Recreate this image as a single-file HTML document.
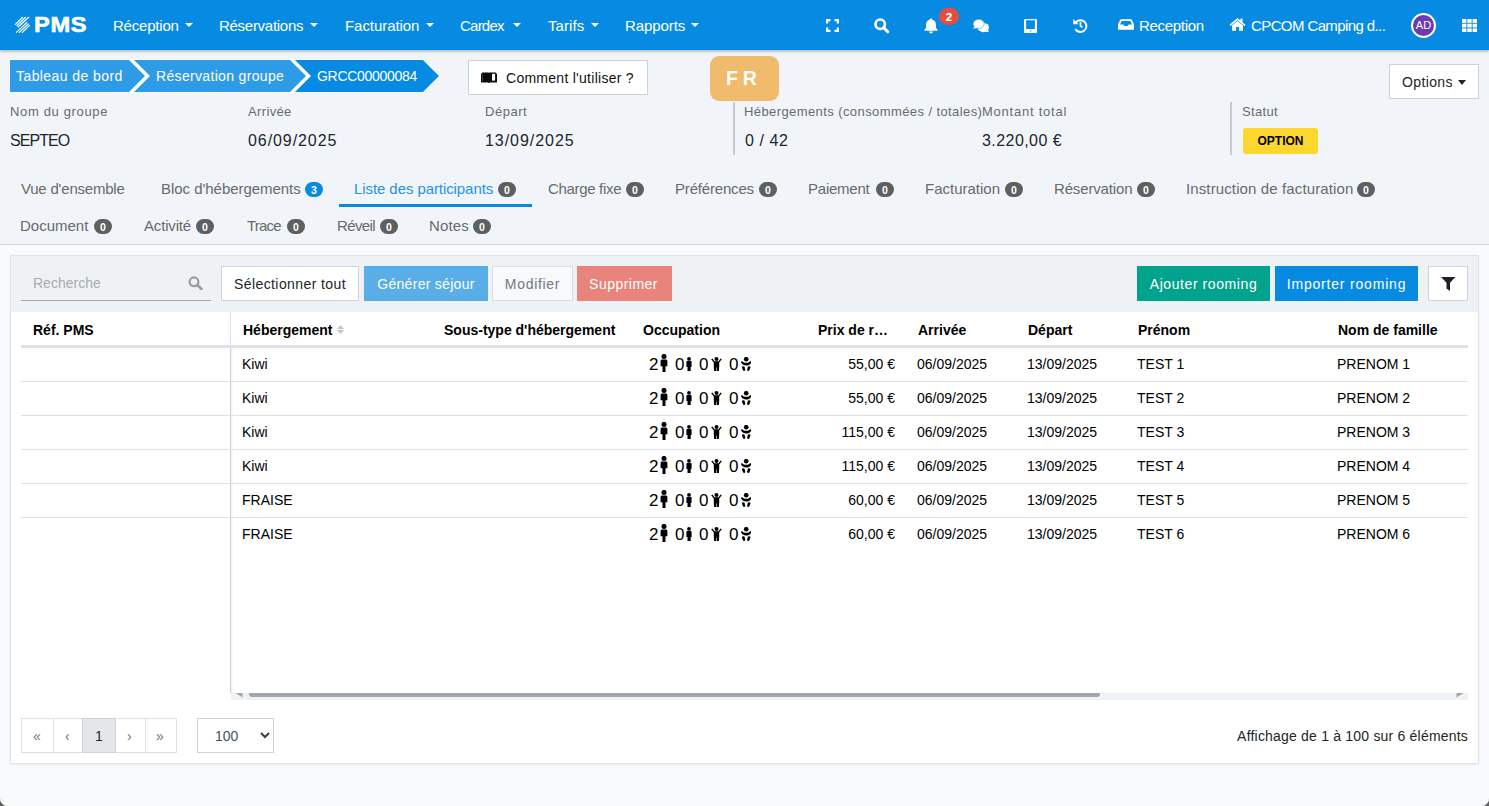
<!DOCTYPE html>
<html><head><meta charset="utf-8">
<style>
*{box-sizing:border-box;margin:0;padding:0}
html,body{width:1489px;height:806px;overflow:hidden}
body{position:relative;background:#f8fafc;font-family:"Liberation Sans",sans-serif;color:#212529}
.a{position:absolute;white-space:nowrap}
#nav{position:absolute;left:0;top:0;width:1489px;height:50px;background:#078be2;box-shadow:0 1px 3px rgba(0,0,0,.35);z-index:5}
.ni{position:absolute;top:17px;font-size:15px;line-height:18px;color:#fff}
.car{position:absolute;top:23px;width:0;height:0;border-left:4px solid transparent;border-right:4px solid transparent;border-top:4px solid #fff}
#hdr{position:absolute;left:0;top:50px;width:1489px;height:195px;background:#f1f5fa;border-bottom:1px solid #d5d8db}
.lbl{position:absolute;font-size:13px;line-height:16px;color:#666b70}
.val{position:absolute;font-size:16px;line-height:20px;color:#212529}
.tab{position:absolute;font-size:15px;line-height:18px;color:#676a6d}
.bdg{position:absolute;height:15px;width:18px;border-radius:8px;background:#5d5f61;color:#fff;font-size:10.5px;font-weight:bold;line-height:17px;text-align:center}
.btn{position:absolute;font-size:14px;line-height:33px;text-align:center}
.th{position:absolute;top:322px;font-size:14px;font-weight:bold;line-height:16px;color:#000}
.td{position:absolute;font-size:14px;line-height:16px;color:#000}
.occ{position:absolute;font-size:17px;line-height:17px;color:#000}
.rl{position:absolute;left:21px;width:1447px;height:1px;background:#dee2e6}
</style></head><body>
<div id="nav">
  <svg class="a" style="left:0;top:0" width="40" height="50" viewBox="0 0 40 50">
    <g stroke="#fff" stroke-width="1.25" stroke-linecap="round">
      <line x1="15.4" y1="24.4" x2="22.6" y2="17.3"/><line x1="16.9" y1="25.6" x2="25.6" y2="17.3"/><line x1="18.3" y1="26.8" x2="28.8" y2="17.3"/>
      <line x1="16.4" y1="32.4" x2="26.6" y2="22.6"/><line x1="19.3" y1="32.4" x2="28.2" y2="24"/><line x1="22.4" y1="32.4" x2="29.6" y2="25.4"/>
    </g>
  </svg>
  <div class="a" style="left:34px;top:13px;font-size:21.5px;line-height:24px;font-weight:bold;color:#fff;-webkit-text-stroke:0.6px #fff;letter-spacing:0.6px;transform:scaleX(1.1);transform-origin:0 0">PMS</div>
  <div class="ni" style="left:113px;letter-spacing:-0.21px">Réception</div><div class="car" style="left:185px"></div>
  <div class="ni" style="left:219px;letter-spacing:-0.28px">Réservations</div><div class="car" style="left:310px"></div>
  <div class="ni" style="left:345px;letter-spacing:-0.06px">Facturation</div><div class="car" style="left:426px"></div>
  <div class="ni" style="left:460px;letter-spacing:-0.77px">Cardex</div><div class="car" style="left:513px"></div>
  <div class="ni" style="left:548px;letter-spacing:0.09px">Tarifs</div><div class="car" style="left:591px"></div>
  <div class="ni" style="left:625px;letter-spacing:-0.07px">Rapports</div><div class="car" style="left:691px"></div>
  <!-- icons -->
  <svg class="a" style="left:826px;top:19px" width="13" height="13" viewBox="0 0 13 13" fill="none" stroke="#fff" stroke-width="2.2">
    <path d="M1.1 4.5V1.1H4.5M8.5 1.1H11.9V4.5M11.9 8.5V11.9H8.5M4.5 11.9H1.1V8.5"/>
  </svg>
  <svg class="a" style="left:874px;top:18px" width="16" height="16" viewBox="0 0 16 16" fill="none" stroke="#fff">
    <circle cx="6.2" cy="6.2" r="4.7" stroke-width="2.7"/><line x1="9.6" y1="9.6" x2="13.8" y2="13.8" stroke-width="3" stroke-linecap="round"/>
  </svg>
  <svg class="a" style="left:924px;top:18px" width="14" height="16" viewBox="0 0 14 16" fill="#fff">
    <path d="M7 0.5c.8 0 1.3.5 1.3 1.2 2.3.5 3.6 2.4 3.6 4.8v3.2l1.6 2.1v1H0.5v-1l1.6-2.1V6.5c0-2.4 1.3-4.3 3.6-4.8C5.7 1 6.2.5 7 .5z"/><path d="M5 13.6h4c0 1.1-.9 1.9-2 1.9s-2-.8-2-1.9z"/>
  </svg>
  <div class="a" style="left:939px;top:8px;width:20px;height:17px;border-radius:9px;background:#e74c3c;color:#fff;font-size:11.5px;font-weight:bold;line-height:19px;text-align:center;-webkit-text-stroke:0.2px #fff">2</div>
  <svg class="a" style="left:972px;top:19px" width="18" height="14" viewBox="0 0 18 14" fill="#fff">
    <ellipse cx="11.3" cy="8.6" rx="5.7" ry="4.6"/><path d="M13 12.5L17 13.2 15.6 10.2z"/>
    <path d="M1 10L2.2 7.6A5.5 4.6 0 1 1 4.6 9.2z" stroke="#3a9fe6" stroke-width="0.6"/>
  </svg>
  <svg class="a" style="left:1024px;top:18.8px" width="13" height="14.2" viewBox="0 0 13 14.2">
    <path fill="#fff" fill-rule="evenodd" d="M1.3 0H11.7C12.4 0 13 .6 13 1.3V12.9C13 13.6 12.4 14.2 11.7 14.2H1.3C.6 14.2 0 13.6 0 12.9V1.3C0 .6.6 0 1.3 0zM2.1 1.3V10H10.9V1.3z"/>
    <rect x="5.9" y="11.3" width="1.4" height="1.4" fill="#5aaee9"/>
  </svg>
  <svg class="a" style="left:1072px;top:18px" width="16" height="16" viewBox="0 0 16 16" fill="none" stroke="#fff">
    <path d="M3.7 4.6A5.9 5.9 0 1 1 3.3 10.9" stroke-width="2"/><path d="M1.2 .9L1.2 6.2 6.5 6.2z" fill="#fff" stroke="none"/><path d="M8.5 4V7.9L10.3 9.4" stroke-width="1.7"/>
  </svg>
  <svg class="a" style="left:1118px;top:19px" width="16" height="11" viewBox="0 0 16 11" fill="#fff">
    <path fill-rule="evenodd" d="M3.2 0.2h9.6c.5 0 .8.2 1 .6L16 5.2V10.2c0 .4-.3.6-.6.6H.6C.3 10.8 0 10.6 0 10.2V5.2L2.2.8c.2-.4.5-.6 1-.6zM3.6 2L2 5.6h3.4l1 1.4h3.2l1-1.4H14L12.4 2z"/>
  </svg>
  <div class="ni" style="left:1139px;letter-spacing:-0.3px">Reception</div>
  <svg class="a" style="left:1229px;top:17px" width="17" height="14" viewBox="0 0 17 14" fill="#fff">
    <path d="M8.5 1L0.5 7.8l1 1.2L8.5 3.2 15.5 9l1-1.2L13.5 5.2V1.5h-2v2L8.5 1z"/><path d="M3 8.5L8.5 4l5.5 4.5V13.8H10V10H7v3.8H3z"/>
  </svg>
  <div class="ni" style="left:1251px;letter-spacing:-0.6px">CPCOM Camping d...</div>
  <div class="a" style="left:1411px;top:13px;width:25px;height:25px;border-radius:50%;background:#6c3ab4;border:2px solid #fff;color:#fff;font-size:11px;line-height:21px;text-align:center">AD</div>
  <svg class="a" style="left:1462px;top:19px" width="15" height="13.2" viewBox="0 0 15 13.2" fill="#fff"><rect x="0" y="0" width="4.4" height="3.8"/><rect x="5.3" y="0" width="4.4" height="3.8"/><rect x="10.6" y="0" width="4.4" height="3.8"/><rect x="0" y="4.7" width="4.4" height="3.8"/><rect x="5.3" y="4.7" width="4.4" height="3.8"/><rect x="10.6" y="4.7" width="4.4" height="3.8"/><rect x="0" y="9.4" width="4.4" height="3.8"/><rect x="5.3" y="9.4" width="4.4" height="3.8"/><rect x="10.6" y="9.4" width="4.4" height="3.8"/></svg>
</div>

<div id="hdr"></div>
<!-- breadcrumb -->
<svg class="a" style="left:0;top:50px" width="450" height="50" viewBox="0 50 450 50">
    <polygon points="9,59 424,59 441,76 424,93 9,93" fill="#fff"/>
    <polygon points="10,60 129,60 145,76 129,92 10,92" fill="#2e9be6"/>
    <polygon points="134,60 290,60 306,76 290,92 134,92 150,76" fill="#2e9be6"/>
    <polygon points="295,60 423,60 439,76 423,92 295,92 311,76" fill="#078be2"/>
</svg>
<div class="a" style="left:16px;top:68px;font-size:14px;line-height:17px;color:#fff;letter-spacing:0.42px">Tableau de bord</div>
<div class="a" style="left:156px;top:68px;font-size:14px;line-height:17px;color:#fff;letter-spacing:0.33px">Réservation groupe</div>
<div class="a" style="left:317px;top:68px;font-size:14px;line-height:17px;color:#fff;letter-spacing:-0.3px">GRCC00000084</div>

<div class="a" style="left:468px;top:60px;width:180px;height:35px;background:#fff;border:1px solid #cdd2d8"></div>
<svg class="a" style="left:481px;top:72px" width="16" height="11" viewBox="0 0 16 11"><path d="M0 1.6H1.1V0.6H7.6L8 1 8.4 0.6H14.9V1.6H16V10.6H9.2L8 11 6.8 10.6H0z" fill="#0b0b0b"/><rect x="11" y="1.8" width="3.1" height="6.8" fill="#fff"/><rect x="0.9" y="2" width="0.6" height="7.6" fill="#7a6040"/></svg>
<div class="a" style="left:506px;top:70px;font-size:14px;line-height:17px;color:#111;letter-spacing:0.27px">Comment l'utiliser ?</div>

<div class="a" style="left:710px;top:56px;width:69px;height:45px;border-radius:9px;background:#f0bb6c"></div><div class="a" style="left:726px;top:67px;color:#fff;font-size:19.5px;font-weight:bold;line-height:22px;letter-spacing:-0.3px">F R</div>

<div class="a" style="left:1389px;top:64px;width:90px;height:35px;background:#fff;border:1px solid #cdd2d8"></div>
<div class="a" style="left:1402px;top:74px;font-size:14px;line-height:17px;color:#212529;letter-spacing:0.38px">Options</div>
<div class="car" style="left:1458px;top:80px;border-top-color:#212529;border-left-width:4.5px;border-right-width:4.5px;border-top-width:5px"></div>

<div class="lbl" style="left:10px;top:104px;letter-spacing:0.65px">Nom du groupe</div>
<div class="val" style="left:10px;top:131px;letter-spacing:-0.93px">SEPTEO</div>
<div class="lbl" style="left:248px;top:104px;letter-spacing:0.36px">Arrivée</div>
<div class="val" style="left:248px;top:131px;letter-spacing:0.92px">06/09/2025</div>
<div class="lbl" style="left:485px;top:104px;letter-spacing:0.54px">Départ</div>
<div class="val" style="left:485px;top:131px;letter-spacing:0.96px">13/09/2025</div>
<div class="a" style="left:733px;top:102px;width:2px;height:53px;background:#c9c9c9"></div>
<div class="lbl" style="left:744px;top:104px;letter-spacing:0.41px">Hébergements (consommées / totales)</div>
<div class="val" style="left:745px;top:131px;letter-spacing:0.55px">0 / 42</div>
<div class="lbl" style="left:982px;top:104px;letter-spacing:0.76px">Montant total</div>
<div class="val" style="left:982px;top:131px;letter-spacing:0.44px">3.220,00 €</div>
<div class="a" style="left:1230px;top:102px;width:2px;height:53px;background:#c9c9c9"></div>
<div class="lbl" style="left:1242px;top:104px;letter-spacing:0.33px">Statut</div>
<div class="a" style="left:1243px;top:128px;width:75px;height:26px;border-radius:3px;background:#fdd630;color:#000;font-size:12px;font-weight:bold;line-height:26px;text-align:center">OPTION</div>

<!-- tabs -->
<div class="tab" style="left:21px;top:180px;letter-spacing:-0.21px">Vue d'ensemble</div>
<div class="tab" style="left:161px;top:180px;letter-spacing:-0.04px">Bloc d'hébergements</div><div class="bdg" style="left:305px;top:182px;background:#078be2">3</div>
<div class="tab" style="left:354px;top:180px;color:#2893e3;letter-spacing:-0.08px">Liste des participants</div><div class="bdg" style="left:498px;top:182px">0</div>
<div class="a" style="left:339px;top:204px;width:193px;height:3px;background:#078be2"></div>
<div class="tab" style="left:548px;top:180px;letter-spacing:-0.32px">Charge fixe</div><div class="bdg" style="left:626px;top:182px">0</div>
<div class="tab" style="left:675px;top:180px;letter-spacing:-0.18px">Préférences</div><div class="bdg" style="left:759px;top:182px">0</div>
<div class="tab" style="left:808px;top:180px;letter-spacing:-0.23px">Paiement</div><div class="bdg" style="left:876px;top:182px">0</div>
<div class="tab" style="left:925px;top:180px">Facturation</div><div class="bdg" style="left:1005px;top:182px">0</div>
<div class="tab" style="left:1054px;top:180px;letter-spacing:-0.15px">Réservation</div><div class="bdg" style="left:1137px;top:182px">0</div>
<div class="tab" style="left:1186px;top:180px;letter-spacing:0.12px">Instruction de facturation</div><div class="bdg" style="left:1357px;top:182px">0</div>

<div class="tab" style="left:20px;top:217px">Document</div><div class="bdg" style="left:94px;top:219px">0</div>
<div class="tab" style="left:144px;top:217px;letter-spacing:-0.17px">Activité</div><div class="bdg" style="left:196px;top:219px">0</div>
<div class="tab" style="left:247px;top:217px;letter-spacing:-0.79px">Trace</div><div class="bdg" style="left:287px;top:219px">0</div>
<div class="tab" style="left:337px;top:217px;letter-spacing:-0.63px">Réveil</div><div class="bdg" style="left:380px;top:219px">0</div>
<div class="tab" style="left:429px;top:217px;letter-spacing:0.13px">Notes</div><div class="bdg" style="left:473px;top:219px">0</div>

<!-- card -->
<div class="a" style="left:10px;top:255px;width:1469px;height:509px;background:#fff;border:1px solid #dfe3e7;box-shadow:0 1px 2px rgba(0,0,0,.06)"></div>
<div class="a" style="left:11px;top:256px;width:1467px;height:56px;background:#eef2f5"></div>
<svg width="0" height="0" style="position:absolute"><defs>
<symbol id="ad" viewBox="0 0 8 18"><circle cx="4" cy="2.4" r="2.5"/><path d="M0.6 7.2c0-1 .6-1.6 1.4-1.6h4c.8 0 1.4.6 1.4 1.6v5H5.5v5.8H2.5v-5.8H0.6z"/></symbol>
<symbol id="te" viewBox="0 0 6 14"><circle cx="3" cy="1.9" r="1.9"/><path d="M0.4 5c0-.6.4-1 1-1h3.2c.6 0 1 .4 1 1v4.9H4.7v4.1H1.5V9.9H0.4z"/></symbol>
<symbol id="ch" viewBox="0 0 11 14"><circle cx="5.5" cy="2" r="2"/><path d="M0.2 2.2L1.4 1.4 3.4 4.2H7.6L9.6 1.4 10.8 2.2 8.2 5.6V9.6L7.9 14H5.8V10.4H5.2V14H3.1L2.8 9.6V5.6z"/></symbol>
<symbol id="bb" viewBox="0 0 10.4 14"><circle cx="5.2" cy="2.2" r="2.3"/><path d="M0.9 3.9c1.2 1.3 2.6 1.9 4.3 1.9s3.1-.6 4.3-1.9l1 1.2C9.3 7.3 7.5 8.6 5.2 8.6S1.1 7.3-.1 5.1z"/><path d="M1.5 9.5c.9-.5 2-.1 2.2.8l.6 2.5c.2.7-.4 1.2-1.1 1.2-.5 0-1-.3-1.2-.8L1 10.8c-.2-.5 0-1 .5-1.3z"/><path d="M8.9 9.5c-.9-.5-2-.1-2.2.8l-.6 2.5c-.2.7.4 1.2 1.1 1.2.5 0 1-.3 1.2-.8l1-2.4c.2-.5 0-1-.5-1.3z"/></symbol>
</defs></svg>
<div class="a" style="left:33px;top:275px;font-size:14px;line-height:16px;color:#a9acaf">Recherche</div>
<div class="a" style="left:21px;top:300px;width:190px;height:1px;background:#a3a6a9"></div>
<svg class="a" style="left:188px;top:276px" width="16" height="14" viewBox="0 0 16 14" fill="none" stroke="#9a9c9e"><circle cx="6" cy="5.8" r="4.4" stroke-width="2.2"/><line x1="9.3" y1="9" x2="13.5" y2="13" stroke-width="2.6" stroke-linecap="round"/></svg>
<div class="btn" style="left:221px;top:266px;width:138px;height:35px;background:#fff;border:1px solid #cfd4d9;color:#212529;letter-spacing:0.4px;line-height:35px">Sélectionner tout</div>
<div class="btn" style="left:364px;top:266px;width:124px;height:35px;background:#59aee8;color:#fff;letter-spacing:0.29px;line-height:37px">Générer séjour</div>
<div class="btn" style="left:492px;top:266px;width:81px;height:35px;background:#f8f9fa;border:1px solid #dadee2;color:#73787d;letter-spacing:0.7px;line-height:35px">Modifier</div>
<div class="btn" style="left:577px;top:266px;width:95px;height:35px;background:#e9847c;color:#fff;letter-spacing:0.47px;text-indent:-2px;line-height:37px">Supprimer</div>
<div class="btn" style="left:1137px;top:266px;width:133px;height:35px;background:#02a38c;color:#fff;letter-spacing:0.58px;line-height:37px">Ajouter rooming</div>
<div class="btn" style="left:1275px;top:266px;width:143px;height:35px;background:#078be2;color:#fff;letter-spacing:0.81px;line-height:37px">Importer rooming</div>
<div class="a" style="left:1428px;top:266px;width:40px;height:35px;background:#fff;border:1px solid #cfd4d9"></div>
<svg class="a" style="left:1440.8px;top:276.8px" width="15" height="14.2" viewBox="0 0 15 14.2" fill="#1d2024"><path d="M0 0H14.4L9 5.8V14L5.5 11.6V5.8z"/></svg>
<div class="a" style="left:230px;top:312px;width:1px;height:381px;background:#dde1e5"></div>
<div class="a" style="left:230px;top:348px;width:1px;height:345px;background:#cdd1d5"></div><div class="a" style="left:231px;top:348px;width:2px;height:345px;background:linear-gradient(90deg,#eef0f2,#fbfbfc)"></div>
<div class="a" style="left:21px;top:345px;width:1447px;height:3px;background:#dee2e6"></div>
<div class="th" style="left:33px">Réf. PMS</div>
<div class="th" style="left:243px">Hébergement</div>
<div class="th" style="left:444px">Sous-type d'hébergement</div>
<div class="th" style="left:643px">Occupation</div>
<div class="th" style="left:818px">Prix de r…</div>
<div class="th" style="left:918px">Arrivée</div>
<div class="th" style="left:1028px">Départ</div>
<div class="th" style="left:1138px">Prénom</div>
<div class="th" style="left:1338px">Nom de famille</div>
<svg class="a" style="left:336.8px;top:325px" width="7" height="9" viewBox="0 0 7 9" fill="#c3c4c6"><path d="M3.5 0L7 3.9H0z M3.5 9L7 4.9H0z"/></svg>
<div class="rl" style="top:381px"></div>
<div class="td" style="left:242px;top:356px">Kiwi</div>
<div class="occ" style="left:649px;top:356px">2</div><svg class="a" style="left:660px;top:354px" width="8" height="18"><use href="#ad"/></svg>
<div class="occ" style="left:675px;top:356px">0</div><svg class="a" style="left:686px;top:357px" width="6" height="14"><use href="#te"/></svg>
<div class="occ" style="left:699px;top:356px">0</div><svg class="a" style="left:711px;top:357px" width="11" height="14"><use href="#ch"/></svg>
<div class="occ" style="left:729px;top:356px">0</div><svg class="a" style="left:741px;top:357px" width="10.4" height="14"><use href="#bb"/></svg>
<div class="td" style="left:795px;width:100px;text-align:right;top:356px">55,00 €</div>
<div class="td" style="left:917px;top:356px">06/09/2025</div>
<div class="td" style="left:1027px;top:356px">13/09/2025</div>
<div class="td" style="left:1137px;top:356px">TEST 1</div>
<div class="td" style="left:1337px;top:356px">PRENOM 1</div>
<div class="rl" style="top:415px"></div>
<div class="td" style="left:242px;top:390px">Kiwi</div>
<div class="occ" style="left:649px;top:390px">2</div><svg class="a" style="left:660px;top:388px" width="8" height="18"><use href="#ad"/></svg>
<div class="occ" style="left:675px;top:390px">0</div><svg class="a" style="left:686px;top:391px" width="6" height="14"><use href="#te"/></svg>
<div class="occ" style="left:699px;top:390px">0</div><svg class="a" style="left:711px;top:391px" width="11" height="14"><use href="#ch"/></svg>
<div class="occ" style="left:729px;top:390px">0</div><svg class="a" style="left:741px;top:391px" width="10.4" height="14"><use href="#bb"/></svg>
<div class="td" style="left:795px;width:100px;text-align:right;top:390px">55,00 €</div>
<div class="td" style="left:917px;top:390px">06/09/2025</div>
<div class="td" style="left:1027px;top:390px">13/09/2025</div>
<div class="td" style="left:1137px;top:390px">TEST 2</div>
<div class="td" style="left:1337px;top:390px">PRENOM 2</div>
<div class="rl" style="top:449px"></div>
<div class="td" style="left:242px;top:424px">Kiwi</div>
<div class="occ" style="left:649px;top:424px">2</div><svg class="a" style="left:660px;top:422px" width="8" height="18"><use href="#ad"/></svg>
<div class="occ" style="left:675px;top:424px">0</div><svg class="a" style="left:686px;top:425px" width="6" height="14"><use href="#te"/></svg>
<div class="occ" style="left:699px;top:424px">0</div><svg class="a" style="left:711px;top:425px" width="11" height="14"><use href="#ch"/></svg>
<div class="occ" style="left:729px;top:424px">0</div><svg class="a" style="left:741px;top:425px" width="10.4" height="14"><use href="#bb"/></svg>
<div class="td" style="left:795px;width:100px;text-align:right;top:424px">115,00 €</div>
<div class="td" style="left:917px;top:424px">06/09/2025</div>
<div class="td" style="left:1027px;top:424px">13/09/2025</div>
<div class="td" style="left:1137px;top:424px">TEST 3</div>
<div class="td" style="left:1337px;top:424px">PRENOM 3</div>
<div class="rl" style="top:483px"></div>
<div class="td" style="left:242px;top:458px">Kiwi</div>
<div class="occ" style="left:649px;top:458px">2</div><svg class="a" style="left:660px;top:456px" width="8" height="18"><use href="#ad"/></svg>
<div class="occ" style="left:675px;top:458px">0</div><svg class="a" style="left:686px;top:459px" width="6" height="14"><use href="#te"/></svg>
<div class="occ" style="left:699px;top:458px">0</div><svg class="a" style="left:711px;top:459px" width="11" height="14"><use href="#ch"/></svg>
<div class="occ" style="left:729px;top:458px">0</div><svg class="a" style="left:741px;top:459px" width="10.4" height="14"><use href="#bb"/></svg>
<div class="td" style="left:795px;width:100px;text-align:right;top:458px">115,00 €</div>
<div class="td" style="left:917px;top:458px">06/09/2025</div>
<div class="td" style="left:1027px;top:458px">13/09/2025</div>
<div class="td" style="left:1137px;top:458px">TEST 4</div>
<div class="td" style="left:1337px;top:458px">PRENOM 4</div>
<div class="rl" style="top:517px"></div>
<div class="td" style="left:242px;top:492px">FRAISE</div>
<div class="occ" style="left:649px;top:492px">2</div><svg class="a" style="left:660px;top:490px" width="8" height="18"><use href="#ad"/></svg>
<div class="occ" style="left:675px;top:492px">0</div><svg class="a" style="left:686px;top:493px" width="6" height="14"><use href="#te"/></svg>
<div class="occ" style="left:699px;top:492px">0</div><svg class="a" style="left:711px;top:493px" width="11" height="14"><use href="#ch"/></svg>
<div class="occ" style="left:729px;top:492px">0</div><svg class="a" style="left:741px;top:493px" width="10.4" height="14"><use href="#bb"/></svg>
<div class="td" style="left:795px;width:100px;text-align:right;top:492px">60,00 €</div>
<div class="td" style="left:917px;top:492px">06/09/2025</div>
<div class="td" style="left:1027px;top:492px">13/09/2025</div>
<div class="td" style="left:1137px;top:492px">TEST 5</div>
<div class="td" style="left:1337px;top:492px">PRENOM 5</div>
<div class="td" style="left:242px;top:526px">FRAISE</div>
<div class="occ" style="left:649px;top:526px">2</div><svg class="a" style="left:660px;top:524px" width="8" height="18"><use href="#ad"/></svg>
<div class="occ" style="left:675px;top:526px">0</div><svg class="a" style="left:686px;top:527px" width="6" height="14"><use href="#te"/></svg>
<div class="occ" style="left:699px;top:526px">0</div><svg class="a" style="left:711px;top:527px" width="11" height="14"><use href="#ch"/></svg>
<div class="occ" style="left:729px;top:526px">0</div><svg class="a" style="left:741px;top:527px" width="10.4" height="14"><use href="#bb"/></svg>
<div class="td" style="left:795px;width:100px;text-align:right;top:526px">60,00 €</div>
<div class="td" style="left:917px;top:526px">06/09/2025</div>
<div class="td" style="left:1027px;top:526px">13/09/2025</div>
<div class="td" style="left:1137px;top:526px">TEST 6</div>
<div class="td" style="left:1337px;top:526px">PRENOM 6</div>
<div class="a" style="left:231px;top:693px;width:1237px;height:7px;background:#eef2f5"></div>
<div class="a" style="left:249px;top:693px;width:851px;height:4px;background:#a4a7aa;border-radius:0 0 3px 3px"></div>
<svg class="a" style="left:235px;top:693px" width="8" height="5" viewBox="0 0 8 5" fill="#a4a7aa"><path d="M0.5 0H7.5V4.5z"/></svg>
<svg class="a" style="left:1456px;top:693px" width="8" height="5" viewBox="0 0 8 5" fill="#a4a7aa"><path d="M0.5 0H7.5L0.5 4.5z"/></svg>
<div class="a" style="left:21px;top:718px;width:156px;height:35px;border:1px solid #dee2e6;background:#fff"></div>
<div class="a" style="left:82px;top:718px;width:34px;height:35px;background:#e4e7ea;border:1px solid #cfd3d7"></div>
<div class="a" style="left:53px;top:718px;width:1px;height:35px;background:#dee2e6"></div>
<div class="a" style="left:145px;top:718px;width:1px;height:35px;background:#dee2e6"></div>
<div class="a" style="left:33px;top:728px;font-size:14px;line-height:16px;color:#6c757d">«</div>
<div class="a" style="left:65px;top:728px;font-size:14px;line-height:16px;color:#6c757d">‹</div>
<div class="a" style="left:95px;top:728px;font-size:14px;line-height:16px;color:#212529">1</div>
<div class="a" style="left:127px;top:728px;font-size:14px;line-height:16px;color:#6c757d">›</div>
<div class="a" style="left:156px;top:728px;font-size:14px;line-height:16px;color:#6c757d">»</div>
<div class="a" style="left:197px;top:718px;width:77px;height:35px;border:1px solid #ced4da;background:#fff"></div>
<div class="a" style="left:215px;top:728px;font-size:14px;line-height:16px;color:#495057">100</div>
<svg class="a" style="left:260px;top:732px" width="10" height="7" viewBox="0 0 10 7" fill="none" stroke="#3a3f44" stroke-width="2"><path d="M1 1l4 4 4-4"/></svg>
<div class="a" style="left:1168px;width:300px;text-align:right;top:728px;font-size:14px;line-height:16px;color:#212529;letter-spacing:0.2px">Affichage de 1 à 100 sur 6 éléments</div>
<svg class="a" style="left:0;top:798px;z-index:9" width="8" height="8" viewBox="0 0 8 8"><path d="M0 0A8 8 0 0 0 8 8H0z" fill="#5f5f5f"/><path d="M0 0A8 8 0 0 0 8 8" fill="none" stroke="#fff" stroke-width="0.8" opacity=".8"/></svg>
<svg class="a" style="left:1481px;top:798px;z-index:9" width="8" height="8" viewBox="0 0 8 8"><path d="M8 0A8 8 0 0 1 0 8H8z" fill="#5f5f5f"/><path d="M8 0A8 8 0 0 1 0 8" fill="none" stroke="#fff" stroke-width="0.8" opacity=".8"/></svg>
</body></html>
